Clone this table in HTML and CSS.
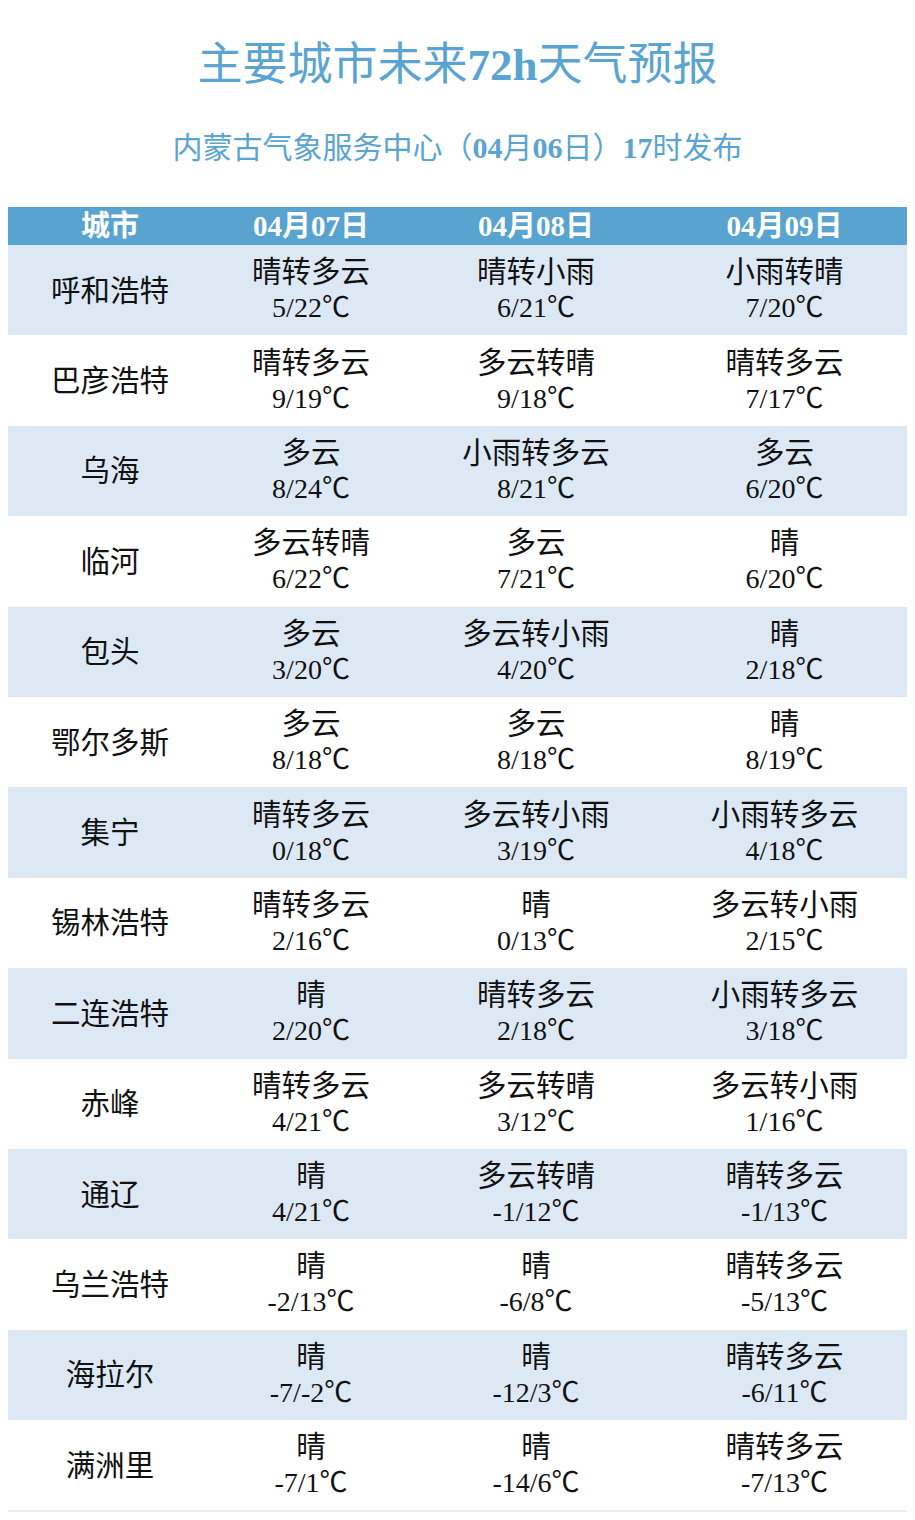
FILE: index.html
```html
<!DOCTYPE html>
<html lang="zh-CN">
<head>
<meta charset="utf-8">
<title>主要城市未来72h天气预报</title>
<link rel="stylesheet" href="styles.css">
</head>
<body>
<div class="page">
  <h1 class="title">主要城市未来<b>72h</b>天气预报</h1>
  <p class="subtitle">内蒙古气象服务中心（<b>04</b>月<b>06</b>日）<b>17</b>时发布</p>
  <div class="table">
    <div class="row head">
      <div class="hcell">城市</div>
      <div class="hcell"><b>04</b>月<b>07</b>日</div>
      <div class="hcell"><b>04</b>月<b>08</b>日</div>
      <div class="hcell"><b>04</b>月<b>09</b>日</div>
    </div>
    <div class="row alt"><div class="cell city">呼和浩特</div><div class="cell"><span>晴转多云</span><span class="t">5/22℃</span></div><div class="cell"><span>晴转小雨</span><span class="t">6/21℃</span></div><div class="cell"><span>小雨转晴</span><span class="t">7/20℃</span></div></div>
    <div class="row"><div class="cell city">巴彦浩特</div><div class="cell"><span>晴转多云</span><span class="t">9/19℃</span></div><div class="cell"><span>多云转晴</span><span class="t">9/18℃</span></div><div class="cell"><span>晴转多云</span><span class="t">7/17℃</span></div></div>
    <div class="row alt"><div class="cell city">乌海</div><div class="cell"><span>多云</span><span class="t">8/24℃</span></div><div class="cell"><span>小雨转多云</span><span class="t">8/21℃</span></div><div class="cell"><span>多云</span><span class="t">6/20℃</span></div></div>
    <div class="row"><div class="cell city">临河</div><div class="cell"><span>多云转晴</span><span class="t">6/22℃</span></div><div class="cell"><span>多云</span><span class="t">7/21℃</span></div><div class="cell"><span>晴</span><span class="t">6/20℃</span></div></div>
    <div class="row alt"><div class="cell city">包头</div><div class="cell"><span>多云</span><span class="t">3/20℃</span></div><div class="cell"><span>多云转小雨</span><span class="t">4/20℃</span></div><div class="cell"><span>晴</span><span class="t">2/18℃</span></div></div>
    <div class="row"><div class="cell city">鄂尔多斯</div><div class="cell"><span>多云</span><span class="t">8/18℃</span></div><div class="cell"><span>多云</span><span class="t">8/18℃</span></div><div class="cell"><span>晴</span><span class="t">8/19℃</span></div></div>
    <div class="row alt"><div class="cell city">集宁</div><div class="cell"><span>晴转多云</span><span class="t">0/18℃</span></div><div class="cell"><span>多云转小雨</span><span class="t">3/19℃</span></div><div class="cell"><span>小雨转多云</span><span class="t">4/18℃</span></div></div>
    <div class="row"><div class="cell city">锡林浩特</div><div class="cell"><span>晴转多云</span><span class="t">2/16℃</span></div><div class="cell"><span>晴</span><span class="t">0/13℃</span></div><div class="cell"><span>多云转小雨</span><span class="t">2/15℃</span></div></div>
    <div class="row alt"><div class="cell city">二连浩特</div><div class="cell"><span>晴</span><span class="t">2/20℃</span></div><div class="cell"><span>晴转多云</span><span class="t">2/18℃</span></div><div class="cell"><span>小雨转多云</span><span class="t">3/18℃</span></div></div>
    <div class="row"><div class="cell city">赤峰</div><div class="cell"><span>晴转多云</span><span class="t">4/21℃</span></div><div class="cell"><span>多云转晴</span><span class="t">3/12℃</span></div><div class="cell"><span>多云转小雨</span><span class="t">1/16℃</span></div></div>
    <div class="row alt"><div class="cell city">通辽</div><div class="cell"><span>晴</span><span class="t">4/21℃</span></div><div class="cell"><span>多云转晴</span><span class="t">-1/12℃</span></div><div class="cell"><span>晴转多云</span><span class="t">-1/13℃</span></div></div>
    <div class="row"><div class="cell city">乌兰浩特</div><div class="cell"><span>晴</span><span class="t">-2/13℃</span></div><div class="cell"><span>晴</span><span class="t">-6/8℃</span></div><div class="cell"><span>晴转多云</span><span class="t">-5/13℃</span></div></div>
    <div class="row alt"><div class="cell city">海拉尔</div><div class="cell"><span>晴</span><span class="t">-7/-2℃</span></div><div class="cell"><span>晴</span><span class="t">-12/3℃</span></div><div class="cell"><span>晴转多云</span><span class="t">-6/11℃</span></div></div>
    <div class="row last"><div class="cell city">满洲里</div><div class="cell"><span>晴</span><span class="t">-7/1℃</span></div><div class="cell"><span>晴</span><span class="t">-14/6℃</span></div><div class="cell"><span>晴转多云</span><span class="t">-7/13℃</span></div></div>
  </div>
</div>
</body>
</html>
```
FILE: styles.css
```css
html, body {
  margin: 0;
  padding: 0;
  background: #ffffff;
}
body {
  font-family: "Liberation Serif", "Noto Sans CJK SC", serif;
  color: #111111;
}
.page {
  width: 915px;
}
.title {
  margin: 0;
  padding-top: 40px;
  height: 50px;
  line-height: 50px;
  font-size: 45px;
  font-weight: normal;
  text-align: center;
  color: #5aa4d2;
  font-family: "Liberation Serif", "Noto Sans CJK SC", serif;
}
.title b {
  font-weight: bold;
}
.subtitle {
  margin: 38px 0 0;
  height: 40px;
  line-height: 40px;
  font-size: 30px;
  text-align: center;
  color: #5aa4d2;
}
.subtitle b {
  font-weight: bold;
}
.table {
  margin: 39px 8px 0;
  width: 899px;
  border-bottom: 2px solid #e9ecef;
}
.row {
  display: grid;
  grid-template-columns: 204px 198px 252px 245px;
  height: 90.4px;
  align-items: center;
}
.row.alt {
  background: #dce9f5;
}
.row.head {
  height: 38px;
  background: #58a3cf;
  color: #ffffff;
}
.hcell {
  text-align: center;
  font-size: 29px;
  line-height: 38px;
  font-weight: bold;
  white-space: nowrap;
}
.hcell b {
  font-weight: bold;
}
.cell {
  display: flex;
  flex-direction: column;
  align-items: center;
  justify-content: center;
  text-align: center;
  font-size: 29.5px;
  line-height: 35px;
}
.cell span {
  display: block;
  white-space: nowrap;
}
.cell .t {
  font-size: 28px;
}
.cell.city {
  padding-top: 2px;
}
```
